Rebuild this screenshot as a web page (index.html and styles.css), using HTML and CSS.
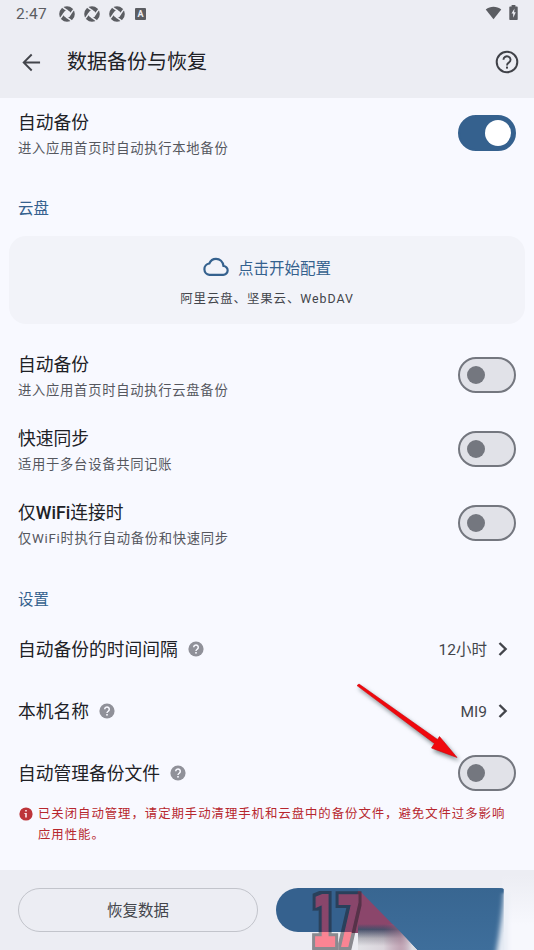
FILE: index.html
```html
<!DOCTYPE html>
<html lang="zh-CN">
<head>
<meta charset="utf-8">
<title>数据备份与恢复</title>
<link rel="stylesheet" href="styles.css">
</head>
<body>
<svg class="defs" width="0" height="0" aria-hidden="true">
  <symbol id="shutter" viewBox="0 0 16 16">
    <circle cx="8" cy="8" r="5.7" fill="none" stroke="#5b5d62" stroke-width="4.2"/>
    <path d="M8 3.600L12.400 8L8 12.400L3.600 8Z" fill="#ecedf3"/>
    <path d="M3.400 1.200L8.800 5.200M14.800 3.400L10.800 8.800M12.600 14.800L7.200 10.800M1.200 12.600L5.200 7.200" stroke="#ecedf3" stroke-width="1.500"/>
  </symbol>
  <symbol id="help" viewBox="0 0 16 16">
    <circle cx="8" cy="8" r="7.6" fill="#909199"/>
    <path d="M5.700 6.300a2.300 2.300 0 1 1 3.700 1.800C8.500 8.800 8 9.100 8 10" fill="none" stroke="#f8f9ff" stroke-width="1.500"/>
    <rect x="7.200" y="11" width="1.600" height="1.600" fill="#f8f9ff"/>
  </symbol>
  <symbol id="chevron" viewBox="0 0 10 16">
    <path d="M1.500 2L7.600 8L1.500 14" fill="none" stroke="#43454b" stroke-width="2.400"/>
  </symbol>
</svg>
<div class="screen">
  <header class="top">
    <div class="status">
      <span class="clock">2:47</span>
      <svg class="shutter"><use href="#shutter"/></svg>
      <svg class="shutter"><use href="#shutter"/></svg>
      <svg class="shutter"><use href="#shutter"/></svg>
      <span class="badge">A</span>
      <svg class="wifi" viewBox="0 0 18 14"><path d="M.8 3.2C5.5-.5 12.5-.5 17.2 3.2L9 13.7Z" fill="#5b5d62"/></svg>
      <svg class="battery" viewBox="0 0 9 15"><path d="M2.600 0h3.800v1.500H8q.7 0 .7.800v11.900q0 .8-.7.800H1q-.7 0-.7-.8V2.300q0-.8.700-.8h1.600Z" fill="#5b5d62"/><path d="M5.500 3.600L2.500 8.500h1.700v4.200L6.800 7.300H5.100Z" fill="#ecedf3"/></svg>
    </div>
    <div class="appbar">
      <svg class="back" viewBox="0 0 20 20"><path d="M19 10H2.200M10.200 1.600L1.800 10L10.200 18.400" fill="none" stroke="#43454b" stroke-width="2"/></svg>
      <h1>数据备份与恢复</h1>
      <svg class="help-large" viewBox="0 0 24 24"><circle cx="12" cy="12" r="10.300" fill="none" stroke="#404248" stroke-width="2"/><path d="M8.500 9.800a3.500 3.400 0 1 1 5.700 2.500C12.700 13.300 12 13.700 12 15.400" fill="none" stroke="#404248" stroke-width="1.900"/><rect x="11" y="16.600" width="2" height="2" fill="#404248"/></svg>
    </div>
  </header>
  <main>
    <section class="row local"><div class="text"><h2>自动备份</h2><p>进入应用首页时自动执行本地备份</p></div><span class="switch on"></span></section>
    <h3 class="cloud-label">云盘</h3>
    <section class="card">
      <div class="configure"><svg class="cloud" viewBox="0 0 26 20"><path d="M6.400 17.800H20a4.400 4.400 0 0 0 .5-8.800C19.900 4.800 16.900 1.900 13 1.900C9.900 1.900 7.500 3.700 6.300 6.500A5.700 5.700 0 0 0 6.400 17.800Z" fill="none" stroke="#35618e" stroke-width="2.200"/></svg><span>点击开始配置</span></div>
      <p>阿里云盘、坚果云、WebDAV</p>
    </section>
    <section class="row first"><div class="text"><h2>自动备份</h2><p>进入应用首页时自动执行云盘备份</p></div><span class="switch"></span></section>
    <section class="row"><div class="text"><h2>快速同步</h2><p>适用于多台设备共同记账</p></div><span class="switch"></span></section>
    <section class="row"><div class="text"><h2>仅<b>WiFi</b>连接时</h2><p>仅WiFi时执行自动备份和快速同步</p></div><span class="switch"></span></section>
    <h3 class="settings-label">设置</h3>
    <section class="row single"><h2>自动备份的时间间隔</h2><svg class="help"><use href="#help"/></svg><span class="value">12小时</span><svg class="chevron"><use href="#chevron"/></svg></section>
    <section class="row single"><h2>本机名称</h2><svg class="help"><use href="#help"/></svg><span class="value device">MI9</span><svg class="chevron"><use href="#chevron"/></svg></section>
    <section class="row single"><h2>自动管理备份文件</h2><svg class="help"><use href="#help"/></svg><span class="switch"></span></section>
    <div class="warning"><svg class="info" viewBox="0 0 14 14"><circle cx="7" cy="7" r="6.600" fill="#bd353a"/><path d="M6.200 3h1.600v1.600H6.200ZM5.400 5.900h2.400v4.600H6.200V7H5.400Z" fill="#f9e9ee"/></svg><p>已关闭自动管理，请定期手动清理手机和云盘中的备份文件，避免文件过多影响应用性能。</p></div>
  </main>
  <footer><button class="restore">恢复数据</button></footer>
  <svg class="watermark" width="264" height="80" viewBox="270 870 264 80">
    <defs>
      <linearGradient id="blue" x1="0" x2="0" y1="888" y2="950" gradientUnits="userSpaceOnUse"><stop offset="0" stop-color="#386691"/><stop offset="1" stop-color="#3e6e9b"/></linearGradient>
      <linearGradient id="shade" x1="0" x2="0" y1="924" y2="946" gradientUnits="userSpaceOnUse"><stop offset="0" stop-color="#344b68" stop-opacity="0"/><stop offset=".25" stop-color="#46516b"/><stop offset=".65" stop-color="#b4b6bd"/><stop offset="1" stop-color="#e3e4e8"/></linearGradient>
      <linearGradient id="shine" x1="355" x2="412" y1="0" y2="0" gradientUnits="userSpaceOnUse"><stop offset="0" stop-color="#8d466b" stop-opacity="0"/><stop offset=".5" stop-color="#8d466b" stop-opacity=".1"/><stop offset=".8" stop-color="#a6728c" stop-opacity=".55"/><stop offset="1" stop-color="#dddde3"/></linearGradient>
      <linearGradient id="pink" x1="0" x2="0" y1="888" y2="950" gradientUnits="userSpaceOnUse"><stop offset="0" stop-color="#89466b"/><stop offset=".71" stop-color="#89466b"/><stop offset=".71" stop-color="#fa8493"/><stop offset="1" stop-color="#fa8493"/></linearGradient>
      <linearGradient id="glow" x1="0" x2="0" y1="875" y2="925" gradientUnits="userSpaceOnUse"><stop offset="0" stop-color="#ecedf3"/><stop offset="1" stop-color="#f7f8fd"/></linearGradient>
      <filter id="soft" x="-1" y="-.2" width="3" height="1.400"><feGaussianBlur stdDeviation="2.500 1"/></filter>
      <filter id="outline" x="-.2" y="-.2" width="1.400" height="1.400" color-interpolation-filters="sRGB"><feMorphology in="SourceAlpha" operator="dilate" radius="3" result="wide"/><feFlood flood-color="#1e1e23" flood-opacity=".48"/><feComposite in2="wide" operator="in" result="rim"/><feMerge><feMergeNode in="rim"/><feMergeNode in="SourceGraphic"/></feMerge></filter>
    </defs>
    <rect x="502" y="872" width="32" height="78" fill="url(#glow)"/>
    <path d="M298 888H496Q502 888 503.500 889V932H298A22 22 0 0 1 298 888Z" fill="#35618e"/>
    <path d="M358 888H496Q502 888 503.500 889V950H417L358 891Z" fill="url(#blue)"/>
    <path d="M504 893Q502 920 496 954H508V893Z" fill="#e8edf5" filter="url(#soft)"/>
    <path d="M358 891H360L401 933H350Z" fill="#8b466b"/>
    <path d="M358 924H393L417 950H358Z" fill="url(#shade)"/>
    <path d="M358 924H393L417 950H358Z" fill="url(#shine)"/>
    <text class="number" x="312" y="946" textLength="49" lengthAdjust="spacingAndGlyphs" filter="url(#outline)">17</text>
  </svg>
  <svg class="arrow" width="110" height="86" viewBox="0 0 110 86"><path d="M3 4.600L5 3L83.500 58.500L85.500 55.500L103 76.500L77.500 67L80.500 62.500Z" fill="#f0080d" stroke="#d00009" stroke-width=".6"/></svg>
</div>
</body>
</html>
```
FILE: styles.css
```css
* { box-sizing: border-box; margin: 0; }
body { overflow: hidden; font-family: Roboto, "Noto Sans CJK SC", sans-serif; }
.defs { position: absolute; }
.screen { position: relative; width: 534px; height: 950px; overflow: hidden; display: flex; flex-direction: column; background: #f8f9ff; color: #202126; }
svg { display: block; flex-shrink: 0; }
.top { height: 98px; background: #ecedf3; }
.status { height: 27px; display: flex; align-items: center; padding: 0 15px 0 16px; color: #5b5d62; }
.clock { width: 43px; padding-top: 2px; font-size: 15.500px; letter-spacing: .3px; line-height: 27px; }
.shutter { width: 16px; height: 16px; margin-right: 9px; }
.badge { width: 11px; height: 12px; margin-left: 1px; border-radius: 1px; background: #5b5d62; color: #ecedf3; font-size: 9px; font-weight: 700; line-height: 12px; text-align: center; }
.wifi { width: 17px; height: 14px; margin-left: auto; margin-right: 7px; margin-top: -2px; }
.battery { width: 9px; height: 15px; margin-top: -2px; margin-right: 1px; }
.appbar { height: 70px; display: flex; align-items: center; padding: 0 15px 0 22px; }
.back { width: 19px; height: 19px; margin-right: 26px; }
.help-large { width: 24px; height: 24px; margin-left: auto; }
h1 { font-size: 20px; font-weight: 400; line-height: 28px; }
main { height: 772px; }
.row { height: 74px; display: flex; align-items: center; padding: 0 18px; }
.local { height: 70px; }
.text { padding-top: 6px; }
h2 { font-size: 17.750px; font-weight: 400; line-height: 26px; }
h2 b { font-weight: 500; }
.text p { font-size: 13.300px; letter-spacing: .73px; line-height: 26px; color: #55575e; }
.switch { position: relative; width: 58px; height: 36px; margin-left: auto; border: 2px solid #74777f; border-radius: 18px; background: #e1e2e8; }
.switch::after { content: ""; position: absolute; left: 7px; top: 7px; width: 18px; height: 18px; border-radius: 50%; background: #74777f; }
.switch.on { background: #35618e; border-color: #35618e; }
.switch.on::after { left: 25px; top: 3px; width: 26px; height: 26px; background: #fff; }
h3 { padding-left: 18px; color: #35618e; font-size: 15.400px; font-weight: 400; }
.cloud-label { height: 68px; padding-top: 13px; line-height: 56px; }
.settings-label { height: 58px; padding-top: 21px; line-height: 38px; }
.card { height: 88px; margin: 0 9px; padding-top: 17px; border-radius: 17px; background: #f2f3f9; }
.configure { display: flex; justify-content: center; align-items: center; gap: 9px; height: 28px; font-size: 15.500px; color: #35618e; }
.cloud { width: 26px; height: 20px; }
.card p { height: 34px; line-height: 36px; text-align: center; font-size: 12.400px; letter-spacing: .95px; color: #43454b; }
.first { margin-top: 14px; }
.single { height: 62px; }
.single h2 { padding-top: 2px; }
.help { width: 16px; height: 16px; margin-left: 10px; }
.value { margin-left: auto; padding-bottom: 2px; font-size: 15.500px; color: #43454b; }
.device { padding: 2px 0 0; }
.chevron { width: 10px; height: 16px; margin-left: 11px; margin-right: 8px; }
.warning { display: flex; padding: 0 18px; margin-top: -1px; }
.info { width: 14px; height: 14px; margin: 4px 5px 0 1px; }
.warning p { width: 474px; color: #b7272e; font-size: 12.400px; letter-spacing: .96px; line-height: 21.300px; }
footer { height: 80px; padding: 18px; background: #ecedf3; }
.restore { display: block; width: 240px; height: 44px; padding-bottom: 3px; border: 1px solid #c2c4cb; border-radius: 22px; background: transparent; color: #43454b; font: 400 15.500px Roboto, "Noto Sans CJK SC", sans-serif; }
.watermark { position: absolute; left: 270px; top: 870px; }
.number { font-family: "DejaVu Sans Mono", monospace; font-size: 70px; font-weight: 700; stroke-linejoin: miter; fill: url(#pink); stroke: url(#pink); stroke-width: 2px; }
.arrow { position: absolute; left: 354px; top: 681px; filter: drop-shadow(2px 3px 2px rgba(40, 60, 60, .6)); }
```
